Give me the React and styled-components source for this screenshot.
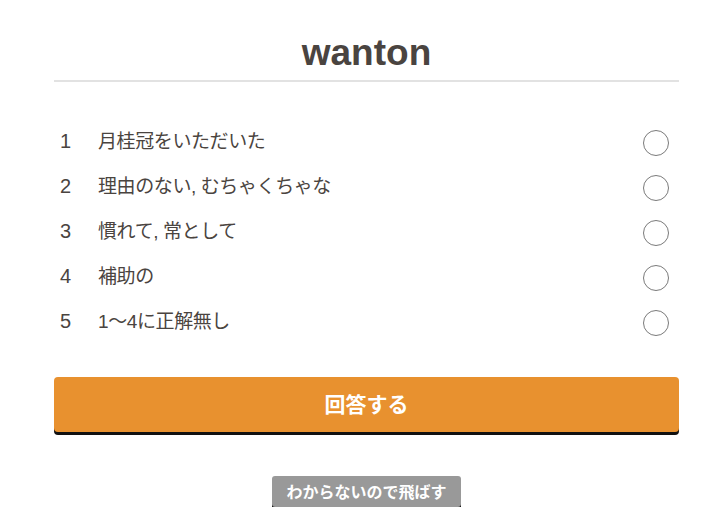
import React from 'react';
import styled, { createGlobalStyle } from 'styled-components';

const GlobalStyle = createGlobalStyle`
	body {
		margin: 0;
		background: #fff;
		font-family: "Liberation Sans", "Noto Sans CJK JP", sans-serif;
		color: #4a4440;
	}
`;

const Wrapper = styled.div`
	width: 625px;
	margin: 0 0 0 54px;
	padding-top: 32px;
`;

const Title = styled.h1`
	margin: 0;
	text-align: center;
	font-size: 37px;
	font-weight: 700;
	line-height: 42px;
	color: #4a4440;
	padding-bottom: 6px;
	border-bottom: 2px solid #e2e2e2;
`;

const Choices = styled.ul`
	list-style: none;
	margin: 0;
	padding: 37px 0 0;
`;

const Choice = styled.li`
	display: flex;
	align-items: center;
	height: 45px;
	font-size: 19px;
	letter-spacing: -0.4px;
`;

const Num = styled.span`
	width: 38px;
	padding-left: 6px;
	font-size: 20px;
`;

const Label = styled.span`
	flex: 1;
	margin-top: -4px;
`;

const Radio = styled.span`
	width: 24px;
	height: 24px;
	border-radius: 50%;
	border: 1px solid #7a7a7a;
	margin-right: 10px;
	margin-top: 3px;
`;

const Answer = styled.button`
	display: block;
	width: 100%;
	height: 55px;
	margin-top: 33px;
	padding: 0 0 4px;
	border: none;
	border-radius: 4px;
	background: #e8912f;
	box-shadow: 0 3px 0 #111;
	color: #fff;
	font-family: inherit;
	font-size: 21px;
	font-weight: 700;
`;

const SkipRow = styled.div`
	display: flex;
	justify-content: center;
	margin-top: 44px;
`;

const Skip = styled.button`
	height: 31px;
	padding: 0 14px 2px;
	border: none;
	border-radius: 3px;
	background: #999;
	box-shadow: 0 2px 0 #111;
	color: #fff;
	font-family: inherit;
	font-size: 16px;
	font-weight: 700;
`;

const choices = [
	'月桂冠をいただいた',
	'理由のない, むちゃくちゃな',
	'慣れて, 常として',
	'補助の',
	'1〜4に正解無し',
];

export default function App() {
	return (
		<>
			<GlobalStyle />
			<Wrapper>
				<Title>wanton</Title>
				<Choices>
					{choices.map((text, i) => (
						<Choice key={i}>
							<Num>{i + 1}</Num>
							<Label>{text}</Label>
							<Radio />
						</Choice>
					))}
				</Choices>
				<Answer>回答する</Answer>
				<SkipRow>
					<Skip>わからないので飛ばす</Skip>
				</SkipRow>
			</Wrapper>
		</>
	);
}
